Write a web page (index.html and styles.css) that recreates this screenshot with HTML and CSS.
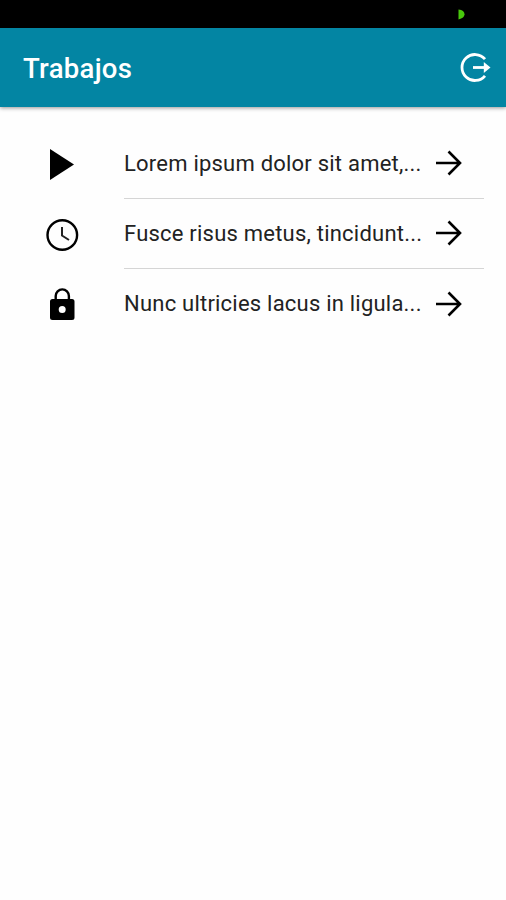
FILE: index.html
```html
<!DOCTYPE html>
<html lang="es">
<head>
<meta charset="utf-8">
<title>Trabajos</title>
<link rel="stylesheet" href="styles.css">
</head>
<body>
<div class="status-bar"><svg class="status-mark" width="7" height="11" viewBox="0 0 7 11"><path d="M0.5 0.5 Q6.5 1 6.5 5.3 Q6.5 9 0.5 10.5Z"/></svg></div>
<header class="toolbar">
  <h1 class="title">Trabajos</h1>
  <svg class="logout" width="32" height="32" viewBox="0 0 32 32"><path d="M25 7.200A13 13 0 1 0 25 23.800"/><path d="M13 15.500H26"/><path class="head" d="M23.800 10L30.500 15.500L23.800 21Z"/></svg>
</header>
<main class="jobs">
  <div class="job">
    <svg class="state" width="34" height="34" viewBox="0 0 34 34"><path d="M5 1L29 16.500L5 32Z"/></svg>
    <div class="content"><span class="label">Lorem ipsum dolor sit amet,...</span><svg class="arrow" width="28" height="28" viewBox="0 0 28 28"><path d="M1 14H25M13.500 2.500L25 14L13.500 25.500"/></svg></div>
  </div>
  <div class="job">
    <svg class="state" width="34" height="34" viewBox="0 0 34 34"><circle class="line" cx="17.300" cy="17" r="14.800"/><path class="hands" d="M17 9V17.500L24 22"/></svg>
    <div class="content"><span class="label">Fusce risus metus, tincidunt...</span><svg class="arrow" width="28" height="28" viewBox="0 0 28 28"><path d="M1 14H25M13.500 2.500L25 14L13.500 25.500"/></svg></div>
  </div>
  <div class="job">
    <svg class="state" width="34" height="34" viewBox="0 0 34 34"><path class="line" d="M10.700 13V8A6.600 6.600 0 0 1 23.900 8V13"/><path fill-rule="evenodd" d="M7.500 11H27Q29.500 11 29.500 13.500V29.500Q29.500 32 27 32H7.500Q5 32 5 29.500V13.500Q5 11 7.500 11ZM17.200 18A3.500 3.500 0 1 0 17.200 25A3.500 3.500 0 1 0 17.200 18Z"/></svg>
    <div class="content"><span class="label">Nunc ultricies lacus in ligula...</span><svg class="arrow" width="28" height="28" viewBox="0 0 28 28"><path d="M1 14H25M13.500 2.500L25 14L13.500 25.500"/></svg></div>
  </div>
</main>
</body>
</html>
```
FILE: styles.css
```css
* { box-sizing: border-box; }
body { margin: 0; min-height: 900px; background: #fefefe; font-family: Roboto, "Liberation Sans", sans-serif; color: #222; }
svg { display: block; flex: none; }
.status-bar { height: 28px; background: #000; display: flex; align-items: center; justify-content: flex-end; padding-right: 41px; }
.status-mark { fill: #48c80c; }
.toolbar { height: 79px; background: #0385a3; display: flex; align-items: center; justify-content: space-between; padding: 0 14px 0 23px; box-shadow: 0 1px 4px rgba(0,0,0,.42); }
.title { margin: 0; padding-top: 2px; font-size: 27.500px; font-weight: 500; letter-spacing: .3px; line-height: 34px; color: #fff; }
.logout { fill: none; stroke: #fff; stroke-width: 2.800; }
.head { fill: #fff; stroke: none; }
.jobs { padding: 21.700px 22px 0 45px; }
.job { display: flex; align-items: center; height: 70.200px; }
.state { margin: 1.500px 45px 0 0; fill: #000; }
.line { fill: none; stroke: #000; stroke-width: 2.400; }
.hands { fill: none; stroke: #222; stroke-width: 2; }
.content { flex: 1; height: 100%; display: flex; align-items: center; justify-content: space-between; border-bottom: 1px solid #d5d5d5; padding-right: 21px; }
.job:last-child .content { border-color: transparent; }
.label { padding-top: 1px; font-size: 22px; letter-spacing: .22px; line-height: 28px; white-space: nowrap; }
.arrow { fill: none; stroke: #000; stroke-width: 2.600; }
```
